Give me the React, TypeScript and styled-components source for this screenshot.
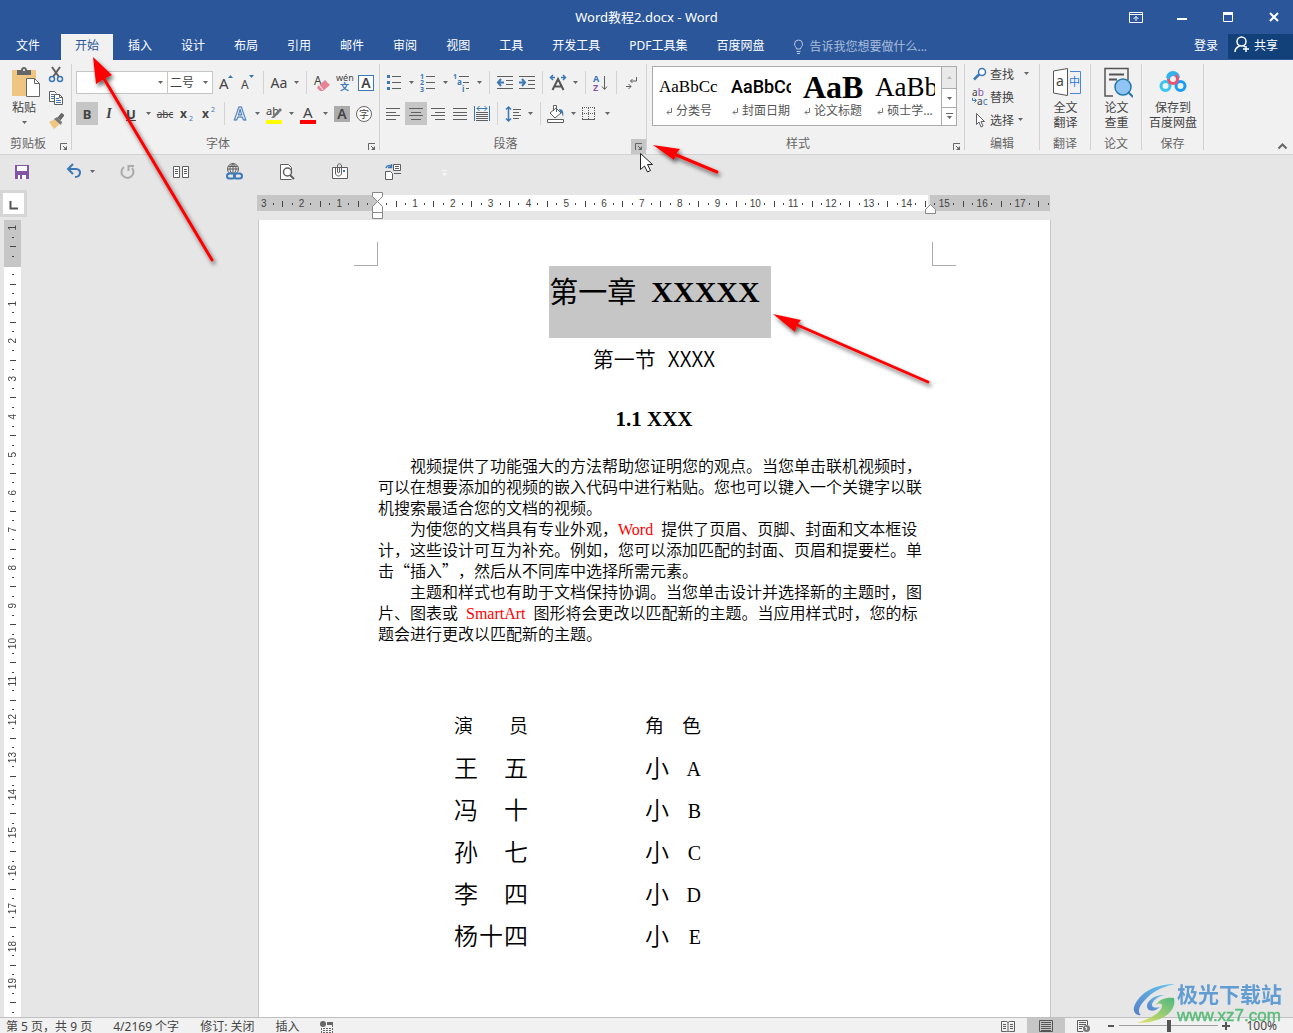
import React from "react";
import styled, { createGlobalStyle, css } from "styled-components";

const UI = `"Noto Sans", "Noto Sans CJK SC", sans-serif`;
const SONG = `"Noto Sans CJK SC", sans-serif`;
const SERIF = `"Liberation Serif", "Noto Sans CJK SC", serif`;

const GlobalStyle = createGlobalStyle`
  *, *::before, *::after { box-sizing: border-box; }
  body { margin: 0; font-family: ${UI}; font-size: 12px; color: #444; background: #e6e6e6; }
  button, input, select { font: inherit; color: inherit; margin: 0; }
  button { border: 0; padding: 0; background: none; cursor: default; }
  h1, h2, h3, p { margin: 0; }
`;

/* ---------- shell ---------- */

const App = styled.div`
  position: relative;
  display: flex;
  flex-direction: column;
  height: 100vh;
  overflow: hidden;
`;

const TitleBar = styled.header`
  display: grid;
  grid-template-columns: 1fr auto 1fr;
  align-items: center;
  height: 34px;
  background: #2b579a;
  color: #fff;
`;
const WindowTitle = styled.span`
  grid-column: 2;
  padding-bottom: 2px;
  font-size: 13px;
`;
const WindowButtons = styled.div`
  display: flex;
  justify-content: flex-end;
  gap: 8px;
`;
const WindowButton = styled.button`
  display: grid;
  place-items: center;
  width: 38px;
  height: 32px;
`;

const TabBar = styled.nav`
  display: flex;
  gap: 1px;
  height: 26px;
  background: #2b579a;
  color: #fff;
`;
const Tab = styled.button<{ $active?: boolean; $first?: boolean }>`
  padding: 0 14px 4px;
  white-space: nowrap;
  ${(p) => p.$first && css`padding: 0 16px 4px; margin-right: 4px;`}
  ${(p) => p.$active && css`background: #f1f1f1; color: #2b579a;`}
`;
const TellMe = styled.label`
  display: flex;
  align-items: center;
  gap: 5px;
  margin-left: 14px;
  color: #b6c7e2;
`;
const TellMeInput = styled.input`
  width: 150px;
  padding: 0 0 2px;
  border: 0;
  outline: 0;
  background: transparent;
  &::placeholder { color: #a9bddb; opacity: 1; }
`;
const Account = styled.div`
  display: flex;
  margin-left: auto;
`;
const SignIn = styled.button`
  padding: 0 10px 4px;
`;
const Share = styled.button`
  display: flex;
  align-items: center;
  gap: 4px;
  height: 25px;
  padding: 0 15px 4px 6px;
  background: #124078;
`;

/* ---------- ribbon ---------- */

const Ribbon = styled.div`
  display: flex;
  flex: none;
  height: 95px;
  background: #f1f1f1;
  border-bottom: 1px solid #d2d2d2;
`;
const GroupBox = styled.section<{ $width: number }>`
  display: flex;
  flex-direction: column;
  flex: 0 0 ${(p) => p.$width}px;
  background: linear-gradient(#d2d2d2, #d2d2d2) right 4px / 1px 86px no-repeat;
  background-position: right 0 top 4px;
`;
const GroupBody = styled.div<{ $pad?: string; $column?: boolean }>`
  display: flex;
  flex: 1;
  flex-direction: ${(p) => (p.$column ? "column" : "row")};
  padding: ${(p) => p.$pad || "6px 0 0"};
`;
const GroupFoot = styled.footer`
  display: flex;
  height: 21px;
  padding-right: 1px;
  color: #666;
`;
const GroupName = styled.span`
  flex: 1;
  text-align: center;
  line-height: 22px;
`;
const Launcher = styled.button<{ $hot?: boolean }>`
  display: grid;
  place-items: center;
  align-self: flex-end;
  width: 15px;
  height: 15px;
  background: ${(p) => (p.$hot ? "#c6c6c6" : "none")};
`;
const Row = styled.div`
  display: flex;
  align-items: center;
  height: 31px;
`;
const Tool = styled.button<{ $on?: boolean }>`
  display: grid;
  place-items: center;
  flex: none;
  width: 22px;
  height: 23px;
  background: ${(p) => (p.$on ? "#c6c6c6" : "none")};
`;
const Drop = styled.button<{ $wide?: boolean }>`
  display: grid;
  place-items: center;
  flex: none;
  width: ${(p) => (p.$wide ? 24 : 12)}px;
  height: 14px;
`;
const Rule = styled.span`
  flex: none;
  width: 1px;
  height: 23px;
  margin: 0 4px;
  background: #d4d4d4;
`;
const ComboBox = styled.span<{ $width: number }>`
  position: relative;
  display: block;
  width: ${(p) => p.$width}px;
  height: 23px;
  background: #fff;
  border: 1px solid #c6c6c6;
  & + & { margin-left: -1px; margin-right: 2px; }
  svg { position: absolute; right: 4px; top: 9px; pointer-events: none; }
`;
const Select = styled.select`
  appearance: none;
  width: 100%;
  height: 100%;
  padding: 0 2px;
  border: 0;
  outline: 0;
  background: transparent;
`;
const BigButton = styled.button<{ $fit?: boolean }>`
  display: flex;
  flex-direction: column;
  align-items: center;
  flex: ${(p) => (p.$fit ? "none" : "1")};
  line-height: 15px;
  svg { display: block; }
`;
const BigLabel = styled.span`
  margin-top: 2px;
  white-space: pre-line;
  text-align: center;
`;
const PasteBox = styled.div`
  width: 48px;
  display: flex;
  flex-direction: column;
  align-items: center;
`;
const SmallStack = styled.div`
  display: flex;
  flex-direction: column;
  align-items: center;
  margin-top: -3px;
  width: 16px;
`;
const EditRow = styled.div`
  display: flex;
  align-items: center;
  height: 23px;
`;
const EditButton = styled.button`
  display: flex;
  align-items: center;
  gap: 2px;
  svg { width: 16px; }
`;

const Gallery = styled.div`
  display: flex;
  height: 60px;
  width: 305px;
  background: #fff;
  border: 1px solid #ababab;
`;
const StyleItem = styled.button`
  display: flex;
  flex-direction: column;
  align-items: center;
  flex: 1;
  min-width: 0;
  padding: 0 6px;
  overflow: hidden;
`;
const Preview = styled.span<{ $font: string; $size: number; $weight?: number }>`
  width: 60px;
  height: 36px;
  line-height: 40px;
  overflow: hidden;
  text-align: left;
  white-space: nowrap;
  color: #000;
  font-family: ${(p) => p.$font};
  font-size: ${(p) => p.$size}px;
  font-weight: ${(p) => p.$weight || 400};
`;
const StyleName = styled.span`
  display: flex;
  align-items: center;
  gap: 3px;
  line-height: 16px;
  white-space: nowrap;
  color: #555;
`;
const GalleryScroll = styled.div`
  display: grid;
  grid-template-rows: 21px 19px 18px;
  width: 15px;
`;
const ScrollButton = styled.button<{ $off?: boolean }>`
  display: grid;
  place-items: center;
  border-left: 1px solid #ababab;
  background: ${(p) => (p.$off ? "#e9e9e9" : "#fff")};
  & + & { border-top: 1px solid #ababab; }
`;
const Collapse = styled.button`
  align-self: flex-end;
  margin: 0 5px 0 auto;
`;

/* ---------- quick access ---------- */

const QuickAccess = styled.div`
  display: flex;
  align-items: center;
  flex: none;
  height: 35px;
  padding: 0 0 2px 11px;
`;
const QuickSlot = styled.div`
  display: flex;
  align-items: center;
  width: 53px;
`;

/* ---------- workspace ---------- */

const Workspace = styled.main`
  display: grid;
  grid-template-columns: 28px 1fr;
  flex: 1;
  min-height: 0;
`;
const Side = styled.div`
  display: flex;
  flex-direction: column;
  min-height: 0;
`;
const TabStop = styled.button`
  display: grid;
  place-items: center;
  flex: none;
  width: 27px;
  height: 27px;
  margin-bottom: 3px;
  padding-top: 4px;
  border: 3px solid #d6d6d6;
  background: #fff;
`;
const VRuler = styled.div`
  flex: 1;
  width: 17px;
  min-height: 0;
  margin-left: 4px;
  overflow: hidden;
  background: linear-gradient(#c6c6c6 47px, #fff 47px);
`;
const VTicks = styled.div`
  display: flex;
  flex-direction: column;
  height: 794px;
  margin-top: 3px;
`;
const Tick = styled.span`
  display: flex;
  align-items: center;
  justify-content: center;
  flex: 1 1 0;
  min-width: 0;
  min-height: 0;
  font: 10px/10px "Liberation Sans", sans-serif;
  color: #444;
`;
const Mark = styled.i<{ $w: number; $h: number }>`
  width: ${(p) => p.$w}px;
  height: ${(p) => p.$h}px;
  background: #444;
`;
const Turned = styled.span`
  writing-mode: vertical-rl;
  transform: rotate(180deg);
`;
const Canvas = styled.div`
  display: flex;
  flex-direction: column;
  align-items: center;
  min-height: 0;
  padding: 5px 14px 0 0;
`;
const HRuler = styled.div`
  position: relative;
  flex: none;
  width: 793px;
  height: 16px;
  margin-bottom: 9px;
  background: linear-gradient(
    to right,
    #c6c6c6 120px, #fff 120px, #fff 671px, #e6e6e6 671px, #e6e6e6 673px, #c6c6c6 673px
  );
`;
const HTicks = styled.div`
  display: flex;
  height: 17px;
  margin: 0 -3px 0 2px;
`;
const Indent = styled.svg<{ $x: number; $y: number }>`
  position: absolute;
  left: ${(p) => p.$x}px;
  top: ${(p) => p.$y}px;
`;
const Page = styled.article`
  flex: 1;
  width: 793px;
  min-height: 0;
  overflow: hidden;
  border: solid #c6c6c6;
  border-width: 0 1px;
  background: #fff;
  color: #000;
  margin-left: 2px;
  text-spacing-trim: space-all;
`;
const Corners = styled.div`
  display: flex;
  justify-content: space-between;
  padding: 22px 94px 0 95px;
`;
const Corner = styled.i<{ $right?: boolean }>`
  width: 24px;
  height: 24px;
  border: solid #ababab;
  border-width: ${(p) => (p.$right ? "0 0 1px 1px" : "0 1px 1px 0")};
`;
const TextArea = styled.div`
  display: flex;
  flex-direction: column;
  margin: 0 120px 0 119px;
`;
const Chapter = styled.h1`
  display: flex;
  align-self: center;
  gap: 15px;
  height: 72px;
  padding-right: 11px;
  margin-right: -12px;
  background: #c6c6c6;
  font: 400 29px/48px ${SONG};
`;
const ChapterLatin = styled.span`
  font-family: ${SERIF};
  font-size: 30px;
  font-weight: 700;
  line-height: 52px;
`;
const Section = styled.h2`
  display: flex;
  justify-content: center;
  gap: 12px;
  margin-bottom: 2px;
  font: 350 21px/40px ${SONG};
`;
const SubSection = styled.h3`
  margin: 18px 0 15px;
  text-align: center;
  font: 700 21px/42px ${SERIF};
`;
const Para = styled.p`
  text-indent: 32px;
  font: 350 16px/21px ${SONG};
`;
const Red = styled.span<{ $lead?: boolean }>`
  margin: 0 8px 0 ${(p) => (p.$lead ? 8 : 0)}px;
  color: #f00;
  font-family: "Liberation Serif", serif;
  font-weight: 400;
  line-height: 16px;
`;
const Cast = styled.table`
  align-self: flex-start;
  margin: 61px 0 0 76px;
  border-collapse: collapse;
  font: 350 24px/42px ${SONG};
`;
const Cell = styled.td`
  width: 74px;
  height: 42px;
  padding: 0;
  & + & { padding-left: 117px; box-sizing: content-box; width: 56px; height: 42px; }
`;
const HeadCell = styled(Cell).attrs({ as: "th", scope: "col" })`
  font-size: 19px;
  font-weight: 350;
`;
const Spread = styled.span`
  display: flex;
  justify-content: space-between;
  height: 42px;
  line-height: 40px;
`;
const Role = styled.span`
  font: 20px/44px "Liberation Serif", serif;
`;

/* ---------- status bar ---------- */

const StatusBar = styled.footer`
  display: flex;
  align-items: center;
  flex: none;
  height: 16px;
  padding: 0 16px 0 6px;
  border-top: 1px solid #c0c0c0;
  background: #f1f1f1;
  line-height: 18px;
`;
const StatusItems = styled.div`
  display: flex;
  align-items: center;
  height: 18px;
  margin-bottom: -3px;
  gap: 21px;
`;
const StatusRight = styled.div`
  display: flex;
  align-items: center;
  margin-left: auto;
`;
const ViewButton = styled.button<{ $on?: boolean }>`
  display: grid;
  place-items: center;
  width: 38px;
  height: 15px;
  background: ${(p) => (p.$on ? "#c6c6c6" : "none")};
`;
const ZoomButton = styled.button`
  display: grid;
  place-items: center;
  width: 16px;
`;
const ZoomRange = styled.input`
  appearance: none;
  width: 99px;
  height: 12px;
  background: linear-gradient(#a0a0a0, #a0a0a0) center / 100% 1px no-repeat;
  &::-webkit-slider-thumb { appearance: none; width: 4px; height: 12px; background: #555; }
`;
const ZoomValue = styled.span`
  width: 32px;
  margin-left: 11px;
  text-align: right;
`;

/* ---------- overlays ---------- */

const Annotations = styled.svg`
  position: absolute;
  left: 0;
  top: 0;
  pointer-events: none;
`;
const Watermark = styled.div`
  position: absolute;
  right: 11px;
  bottom: 8px;
  display: flex;
  align-items: center;
  gap: 2px;
  opacity: 0.85;
  pointer-events: none;
`;
const MarkText = styled.div`
  display: flex;
  flex-direction: column;
`;
const MarkName = styled.span`
  padding-bottom: 2px;
  font: 700 21px/24px ${SONG};
  color: #4a90d0;
`;
const MarkUrl = styled.span`
  font: 400 17px/18px "Liberation Sans", sans-serif;
  color: #45b56a;
  -webkit-text-stroke: 0.5px #45b56a;
`;

/* ---------- icons ---------- */

const G = "#5f5f5f";
const B = "#3b78b5";

type IcoProps = { w?: number; h?: number; children: React.ReactNode };
const Ico = ({ w = 22, h = 22, children }: IcoProps) => (
  <svg width={w} height={h} viewBox={`0 0 ${w} ${h}`} fill="none" aria-hidden="true">
    {children}
  </svg>
);
const Caret = ({ color = "#666" }: { color?: string }) => (
  <Ico w={5} h={3}><path d="M0 0h5L2.500 3z" fill={color} /></Ico>
);
const Arrow = ({ label, wide }: { label: string; wide?: boolean }) => (
  <Drop aria-label={label} $wide={wide}><Caret /></Drop>
);
const lines = (list: number[][], color = G) => (
  <path d={list.map(([x, y, w]) => `M${x} ${y + 0.5}h${w}`).join("")} stroke={color} />
);

const Glyph = styled.span<{ $size?: number; $bold?: boolean; $italic?: boolean; $line?: string; $serif?: boolean }>`
  font-family: ${(p) => (p.$serif ? `"Liberation Serif", serif` : UI)};
  font-size: ${(p) => p.$size || 14}px;
  line-height: 20px;
  font-weight: ${(p) => (p.$bold ? 700 : 400)};
  font-style: ${(p) => (p.$italic ? "italic" : "normal")};
  text-decoration: ${(p) => p.$line || "none"};
  color: #444;
`;
const Boxed = styled.span<{ $fill?: boolean; $round?: boolean }>`
  display: grid;
  place-items: center;
  width: 16px;
  height: 16px;
  line-height: 14px;
  font-size: ${(p) => (p.$round ? 10 : 14)}px;
  font-weight: ${(p) => (p.$round ? 400 : 600)};
  border: ${(p) => (p.$fill ? "0" : p.$round ? "1px solid #666" : "1px solid #3b78b5")};
  border-radius: ${(p) => (p.$round ? "50%" : "0")};
  background: ${(p) => (p.$fill ? "#ababab" : "#fff")};
`;
const SvgText = styled.text<{ $c?: string; $s: number; $b?: boolean }>`
  font-family: ${UI};
  font-size: ${(p) => p.$s}px;
  font-weight: ${(p) => (p.$b ? 700 : 400)};
  fill: ${(p) => p.$c || "#444"};
`;

const icons = {
  paste: (
    <Ico w={32} h={32}>
      <path d="M4 4h24v26H4z" fill="#eec581" />
      <path d="M9 4h4c0-4 6-4 6 0h4v5H9z" fill="#666" />
      <circle cx="16" cy="4" r="1" fill="#fff" />
      <path d="M18.500 12.500h8l5 5v13h-13z" fill="#fff" stroke="#666" />
      <path d="M26.500 12.500v5h5" stroke="#666" />
    </Ico>
  ),
  cut: (
    <Ico w={16}>
      <path d="M4 3l7 10M12 3L5 13" stroke={G} strokeWidth="2" />
      <circle cx="4" cy="15" r="2.500" stroke={B} strokeWidth="1.500" />
      <circle cx="12" cy="15" r="2.500" stroke={B} strokeWidth="1.500" />
    </Ico>
  ),
  copy: (
    <Ico w={16}>
      <path d="M6.500 14.500h-5v-10h5l2 2" stroke={G} fill="#fff" />
      <path d="M6.500 7.500h5l3 3v7h-8z" fill="#fff" stroke={G} />
      <path d="M11.500 7.500v3h3" stroke={G} />
      <path d="M3 7.500h3M3 9.500h3M3 11.500h3M8 11.500h3M8 13.500h5M8 15.500h5" stroke={B} />
    </Ico>
  ),
  brush: (
    <Ico w={16}>
      <path d="M1 12l6-3 5 5-6 5z" fill="#eec581" />
      <path d="M6 9l3-2 5 5-1 3z" fill="#777" />
      <path d="M11 9l4-5" stroke="#666" strokeWidth="4" />
    </Ico>
  ),
  launch: (
    <Ico w={9} h={9}>
      <path d="M1.500 8V1.500H8M4 4l3 3" stroke="#666" />
      <path d="M8 4v4H4z" fill="#666" />
    </Ico>
  ),
  grow: (
    <Ico><SvgText x="4" y="17" $s={15}>A</SvgText><path d="M13 6h5l-2.500-3z" fill={B} /></Ico>
  ),
  shrink: (
    <Ico><SvgText x="4" y="17" $s={12}>A</SvgText><path d="M12 3h5l-2.500 3z" fill={B} /></Ico>
  ),
  eraser: (
    <Ico>
      <SvgText x="3" y="13" $s={12}>A</SvgText>
      <path d="M7 14l7-6 5 5-7 6H9l-3-3z" fill="#e58595" />
      <path d="M8 13l4 5" stroke="#fff" />
    </Ico>
  ),
  phonetic: (
    <Ico w={20}>
      <SvgText x="2" y="9" $s={9}>wén</SvgText>
      <SvgText x="6" y="18" $s={9} $c={B} $b>文</SvgText>
    </Ico>
  ),
  effects: (
    <Ico>
      <text x="11" y="17" textAnchor="middle" fontFamily="Noto Sans" fontSize="17" fontWeight="600" fill="#fff" stroke={B} strokeWidth="1">A</text>
    </Ico>
  ),
  highlight: (
    <Ico>
      <SvgText x="3" y="12" $s={11}>ab</SvgText>
      <path d="M8 15l9-10 2 2-8 8z" fill="#777" />
      <path d="M3 17h16v4H3z" fill="#ff0" />
    </Ico>
  ),
  color: (
    <Ico><SvgText x="6" y="15" $s={15}>A</SvgText><path d="M3 17h16v4H3z" fill="#f00" /></Ico>
  ),
  bullets: (
    <Ico>
      <path d="M4 3h3v3H4zM4 9h3v3H4zM4 15h3v3H4z" fill={B} />
      {lines([[9, 4, 9], [9, 10, 9], [9, 16, 9]])}
    </Ico>
  ),
  numbers: (
    <Ico>
      <SvgText x="3" y="7" $s={7} $c={B} $b>1</SvgText>
      <SvgText x="3" y="13" $s={7} $c={B} $b>2</SvgText>
      <SvgText x="3" y="20" $s={7} $c={B} $b>3</SvgText>
      {lines([[9, 4, 9], [9, 10, 9], [9, 16, 9]])}
    </Ico>
  ),
  multi: (
    <Ico>
      <SvgText x="2" y="7" $s={7} $c={B} $b>1</SvgText>
      <SvgText x="6" y="13" $s={8} $c={B} $b>a</SvgText>
      <SvgText x="11" y="20" $s={8} $c={B} $b>i</SvgText>
      {lines([[8, 4, 10], [12, 10, 6], [15, 16, 3]])}
    </Ico>
  ),
  outdent: (
    <Ico>
      {lines([[3, 4, 16], [12, 8, 7], [12, 12, 7], [3, 16, 16]])}
      <path d="M10 10.500H4M7 7l-3 3.500L7 14" stroke={B} strokeWidth="2" />
    </Ico>
  ),
  indent: (
    <Ico>
      {lines([[3, 4, 16], [12, 8, 7], [12, 12, 7], [3, 16, 16]])}
      <path d="M3 10.500h6M6 7l3 3.500L6 14" stroke={B} strokeWidth="2" />
    </Ico>
  ),
  asian: (
    <Ico>
      <path d="M5.500 18L11 7l5.500 11M7.500 14.500h7" stroke="#555" strokeWidth="2" />
      <path d="M8 5.500H4M6 3L3.500 5.500 6 8M14 5.500h4M16 3l2.500 2.500L16 8" stroke={B} strokeWidth="1.500" />
    </Ico>
  ),
  sort: (
    <Ico>
      <SvgText x="3" y="10" $s={9} $c={B} $b>A</SvgText>
      <SvgText x="3" y="19" $s={9} $c="#8a56a8" $b>Z</SvgText>
      <path d="M14.500 4v13M12 14.500l2.500 3 2.500-3" stroke={G} />
    </Ico>
  ),
  marks: (
    <Ico>
      <path d="M15.500 5v4h-6M11.500 7l-2 2 2 2M5 14.500h5M7.500 12l2.500 2.500L7.500 17" stroke={G} />
    </Ico>
  ),
  left: <Ico>{lines([[3, 5, 14], [3, 9, 10], [3, 12, 14], [3, 16, 10]])}</Ico>,
  center: <Ico>{lines([[4, 5, 14], [6, 9, 10], [4, 12, 14], [6, 16, 10]])}</Ico>,
  right: <Ico>{lines([[4, 5, 14], [8, 9, 10], [4, 12, 14], [8, 16, 10]])}</Ico>,
  justify: <Ico>{lines([[4, 5, 14], [4, 9, 14], [4, 12, 14], [4, 16, 14]])}</Ico>,
  distribute: (
    <Ico>
      <path d="M3.500 3v15M18.500 3v15M6 5.500h10M8.500 3L6 5.500 8.500 8M13.500 3L16 5.500 13.500 8" stroke={B} />
      {lines([[5, 9, 12], [5, 11, 12], [5, 13, 12], [5, 15, 12], [5, 17, 12]])}
    </Ico>
  ),
  spacing: (
    <Ico>
      <path d="M6.500 4v14M4 6.500L6.500 4 9 6.500M4 15.500L6.500 18 9 15.500" stroke={B} strokeWidth="1.500" />
      {lines([[11, 6, 8], [11, 9, 6], [11, 12, 8], [11, 15, 6]])}
    </Ico>
  ),
  shading: (
    <Ico>
      <path d="M5 10l6-5 5 5-6 5zM8.500 8V2.500h3V9" fill="#fff" stroke={G} />
      <path d="M14 6c4 0 5 3 4 8-1-3-1-4-3-5z" fill={B} />
      <path d="M2.500 16.500h16v3h-16z" fill="#fff" stroke={G} />
    </Ico>
  ),
  border: (
    <Ico>
      <path d="M3 4.500h14M3 10.500h14M3.500 5v12M9.500 5v12M15.500 5v12" stroke={G} strokeDasharray="1 1" />
      <path d="M3 16.500h13" stroke={G} />
    </Ico>
  ),
  find: (
    <Ico w={16} h={16}>
      <circle cx="10" cy="6" r="3.500" stroke={B} strokeWidth="1.500" fill="#fff" />
      <path d="M7 8.500L2 13.500" stroke={B} strokeWidth="2.500" />
    </Ico>
  ),
  replace: (
    <Ico w={16} h={18}>
      <SvgText x="0" y="8" $s={10}>a<tspan fill="#8a56a8">b</tspan></SvgText>
      <SvgText x="5" y="17" $s={10}>a<tspan fill={B}>c</tspan></SvgText>
      <path d="M.5 10v2.500H4M2.500 10.500l2 2-2 2" stroke={B} />
    </Ico>
  ),
  pointer: (
    <Ico w={16} h={16}>
      <path d="M4.500 1.500v11l2.500-2.500 2 5 2-1-2-4.500h3.500z" fill="#fff" stroke={G} />
    </Ico>
  ),
  translate: (
    <Ico w={32} h={32}>
      <path d="M3.500 5L17.500 2.500v27L3.500 27z" fill="#fff" stroke="#555" />
      <path d="M20 5.500h10.500v22H20" stroke="#4a86d8" />
      <SvgText x="6" y="20" $s={14}>a</SvgText>
      <SvgText x="19" y="20" $s={11} $c="#2f78d8">中</SvgText>
    </Ico>
  ),
  paper: (
    <Ico w={32} h={32}>
      <path d="M12 30H4V2.500h23V14" stroke="#555" strokeWidth="1.500" />
      <path d="M8 8.500h15M8 13.500h8" stroke="#555" strokeWidth="2" />
      <circle cx="22" cy="21" r="8" fill="#8fc4f5" stroke="#2378a8" strokeWidth="1.500" />
      <path d="M27 26l5 5" stroke="#2378a8" strokeWidth="2" />
    </Ico>
  ),
  baidu: (
    <Ico w={32} h={32}>
      <path d="M11 12a5 5 0 0 1 10 0" stroke="#2fb4ee" strokeWidth="4" />
      <circle cx="8.500" cy="20" r="4.500" stroke="#35c5f2" strokeWidth="3" />
      <circle cx="23.500" cy="20" r="4.500" stroke="#1a9df5" strokeWidth="3" />
      <circle cx="16" cy="13" r="4.500" stroke="#f0506e" strokeWidth="3" />
      <path d="M11.500 13a4.500 4.500 0 0 1 7-4" stroke="#2fb4ee" strokeWidth="3" />
    </Ico>
  ),
  save: (
    <Ico>
      <path d="M4 4h14v14H4z" fill="#8553a5" />
      <path d="M6 5h10v5H6zM7 14h8v4H7z" fill="#fff" />
      <path d="M9 14h2v4H9z" fill="#8553a5" />
    </Ico>
  ),
  undo: (
    <Ico>
      <path d="M5 8h7c6 0 5 8-1 8" stroke={B} strokeWidth="2" />
      <path d="M9 3L4 8l5 5" stroke={B} strokeWidth="2" />
    </Ico>
  ),
  redo: (
    <Ico>
      <path d="M7 6a6 6 0 1 0 8 1" stroke="#ababab" strokeWidth="2" />
      <path d="M11.500 10V5H17" stroke="#ababab" strokeWidth="2" />
    </Ico>
  ),
  columns: (
    <Ico>
      <path d="M3.500 5.500h6v11h-6zM12.500 5.500h6v11h-6z" fill="#fff" stroke={G} />
      {lines([[5, 8, 3], [5, 10, 3], [5, 12, 3], [14, 8, 3], [14, 10, 3], [14, 12, 3]])}
    </Ico>
  ),
  link: (
    <Ico>
      <circle cx="10" cy="8" r="5.500" stroke={G} />
      <path d="M4.500 8h11M10 2.500v11M5.500 5.500h9M10 2.500c-4 3-4 8 0 11M10 2.500c4 3 4 8 0 11" stroke={G} />
      <rect x="4" y="12.500" width="8" height="5" rx="2.500" stroke={B} strokeWidth="2" fill="#e6e6e6" />
      <rect x="11" y="12.500" width="8" height="5" rx="2.500" stroke={B} strokeWidth="2" />
    </Ico>
  ),
  preview: (
    <Ico>
      <path d="M15.500 18.500h-11v-15h8l3 3v4" fill="#fff" stroke={G} />
      <circle cx="11.500" cy="11" r="4" fill="#fff" stroke={G} strokeWidth="1.500" />
      <path d="M14 14l4 4" stroke={G} strokeWidth="2" />
    </Ico>
  ),
  attach: (
    <Ico>
      <path d="M3.500 6.500h15v11h-15z" fill="#fff" stroke={G} />
      <path d="M6.500 6v6c0 4 6 4 6 0V5c0-3-4-3-4 0v6c0 1 2 1 2 0V6" stroke={G} />
      <path d="M14 9h2v2h-2z" fill={B} />
    </Ico>
  ),
  transfer: (
    <Ico>
      <path d="M3.500 10.500h5l2 2v6h-7z" fill="#fff" stroke={G} />
      <path d="M11.500 3.500h7v6h-7z" fill="#fff" stroke={G} />
      <path d="M13 5.500h4M13 7.500h4M12 12.500h7" stroke={G} />
      <path d="M4 7c1-3 4-3 5-1M9.500 3v3.500H6" stroke={B} strokeWidth="1.500" />
    </Ico>
  ),
  more: (
    <Ico><path d="M7 9.500h5" stroke="#f8f8f8" /><path d="M7 12h5l-2.500 3z" fill="#f8f8f8" /></Ico>
  ),
};

type Kind = keyof typeof icons;

const T = ({ icon, label, on }: { icon: Kind; label: string; on?: boolean }) => (
  <Tool aria-label={label} $on={on}>{icons[icon]}</Tool>
);

const Group = ({ name, width, pad, column, launcher, hot, children }: {
  name: string; width: number; pad?: string; column?: boolean; launcher?: boolean; hot?: boolean; children: React.ReactNode;
}) => (
  <GroupBox $width={width} aria-label={name}>
    <GroupBody $pad={pad} $column={column}>{children}</GroupBody>
    <GroupFoot>
      <GroupName>{name}</GroupName>
      {launcher && <Launcher aria-label={`${name}设置`} $hot={hot}>{icons.launch}</Launcher>}
    </GroupFoot>
  </GroupBox>
);

const tabs = ["文件", "开始", "插入", "设计", "布局", "引用", "邮件", "审阅", "视图", "工具", "开发工具", "PDF工具集", "百度网盘"];

const styleItems = [
  { name: "分类号", font: SERIF, size: 17 },
  { name: "封面日期", font: "Roboto, sans-serif", size: 18, weight: 500 },
  { name: "论文标题", font: SERIF, size: 32, weight: 700 },
  { name: "硕士学...", font: SERIF, size: 27 },
];

const cast = [["王五", "A"], ["冯十", "B"], ["孙七", "C"], ["李四", "D"], ["杨十四", "E"]];

const spread = (s: string) => <Spread>{[...s].map((c) => <span key={c}>{c}</span>)}</Spread>;

/* Each ruler unit is four ticks: number, dot, bar, dot. */
const Ticks = ({ zero, vertical }: { zero: number; vertical?: boolean }) => (
  <>
    {Array.from({ length: 84 }, (_, i) => {
      const d = i - zero;
      const phase = ((d % 4) + 4) % 4;
      const n = Math.abs(d / 4);
      if (phase === 0) return <Tick key={i}>{n > 0 && (vertical ? <Turned>{n}</Turned> : n)}</Tick>;
      const len = phase === 2 ? 6 : 2;
      return <Tick key={i}>{vertical ? <Mark $w={len} $h={1} /> : <Mark $w={1} $h={len} />}</Tick>;
    })}
  </>
);

const arrows = [
  { head: "93,57 112,75 104,79 96,84", line: "M103 77L212 260" },
  { head: "773,314 801,320 797,325 795,332", line: "M795 324L928 382" },
  { head: "653,145 680,149 676,154 674,160", line: "M674 154L717 172" },
];

export default function WordWindow() {
  return (
    <App>
      <GlobalStyle />
      <TitleBar>
        <WindowTitle>Word教程2.docx - Word</WindowTitle>
        <WindowButtons>
          <WindowButton aria-label="功能区显示选项">
            <Ico w={14} h={11}><path d="M.5.5h13v10H.5zM.5 2.500h13M7 9V4.500M4.500 7L7 4.500 9.500 7" stroke="#fff" /></Ico>
          </WindowButton>
          <WindowButton aria-label="最小化"><Ico w={10} h={8}><path d="M0 6h10" stroke="#fff" strokeWidth="2" /></Ico></WindowButton>
          <WindowButton aria-label="最大化"><Ico w={10} h={10}><path d="M.5 1h9v8.500h-9zM0 1.500h10" stroke="#fff" /><path d="M0 0h10v3H0z" fill="#fff" /></Ico></WindowButton>
          <WindowButton aria-label="关闭"><Ico w={10} h={10}><path d="M1 1l8 8M9 1L1 9" stroke="#fff" strokeWidth="2" /></Ico></WindowButton>
        </WindowButtons>
      </TitleBar>

      <TabBar>
        {tabs.map((t, i) => <Tab key={t} $first={i === 0} $active={i === 1}>{t}</Tab>)}
        <TellMe>
          <Ico w={11} h={16}>
            <path d="M3.500 10C3.500 8 1.500 7.500 1.500 5a4 4 0 0 1 8 0c0 2.500-2 3-2 5zM3.500 12.500h4M4 14.500h3" stroke="#b6c7e2" />
          </Ico>
          <TellMeInput aria-label="告诉我您想要做什么" placeholder="告诉我您想要做什么..." />
        </TellMe>
        <Account>
          <SignIn>登录</SignIn>
          <Share>
            <Ico w={16} h={17}>
              <circle cx="7.500" cy="5.500" r="4.500" stroke="#fff" strokeWidth="1.500" />
              <path d="M1 16c0-3 2-5 4.500-6M9.500 10l1.500 1M12 10v6M9 13h6" stroke="#fff" strokeWidth="1.500" />
            </Ico>
            共享
          </Share>
        </Account>
      </TabBar>

      <Ribbon>
        <Group name="剪贴板" width={72} launcher>
          <PasteBox>
            <BigButton $fit>{icons.paste}<BigLabel>粘贴</BigLabel></BigButton>
            <Arrow label="粘贴选项" />
          </PasteBox>
          <SmallStack>
            <Tool aria-label="剪切">{icons.cut}</Tool>
            <Tool aria-label="复制">{icons.copy}</Tool>
            <Tool aria-label="格式刷">{icons.brush}</Tool>
          </SmallStack>
        </Group>

        <Group name="字体" width={308} pad="7px 0 0 4px" column launcher>
          <Row>
            <ComboBox $width={92}>
              <Select aria-label="字体名称" defaultValue=""><option value=""></option></Select><Caret />
            </ComboBox>
            <ComboBox $width={46}>
              <Select aria-label="字号"><option>二号</option></Select><Caret />
            </ComboBox>
            <T icon="grow" label="增大字号" /><T icon="shrink" label="减小字号" /><Rule />
            <Tool aria-label="更改大小写"><Glyph>Aa</Glyph></Tool><Arrow label="大小写选项" /><Rule />
            <T icon="eraser" label="清除格式" /><T icon="phonetic" label="拼音指南" />
            <Tool aria-label="字符边框"><Boxed>A</Boxed></Tool>
          </Row>
          <Row>
            <Tool $on aria-label="加粗"><Glyph $bold $size={13}>B</Glyph></Tool>
            <Tool aria-label="倾斜"><Glyph $serif $italic $bold $size={14}>I</Glyph></Tool>
            <Tool aria-label="下划线"><Glyph $line="underline" $bold $size={13}>U</Glyph></Tool><Arrow label="下划线选项" />
            <Tool aria-label="删除线"><Glyph $line="line-through" $size={10}>abc</Glyph></Tool>
            <Tool aria-label="下标"><Ico><SvgText x="4" y="15" $s={12} $b>x</SvgText><SvgText x="13" y="18" $s={7} $c={B}>2</SvgText></Ico></Tool>
            <Tool aria-label="上标"><Ico><SvgText x="4" y="15" $s={12} $b>x</SvgText><SvgText x="13" y="9" $s={7} $c={B}>2</SvgText></Ico></Tool>
            <Rule />
            <T icon="effects" label="文本效果" /><Arrow label="文本效果选项" />
            <T icon="highlight" label="突出显示" /><Arrow label="突出显示颜色" />
            <T icon="color" label="字体颜色" /><Arrow label="字体颜色选项" />
            <Tool aria-label="字符底纹"><Boxed $fill>A</Boxed></Tool>
            <Tool aria-label="带圈字符"><Boxed $round>字</Boxed></Tool>
          </Row>
        </Group>

        <Group name="段落" width={267} pad="7px 0 0 3px" column launcher hot>
          <Row>
            <T icon="bullets" label="项目符号" /><Arrow label="项目符号库" />
            <T icon="numbers" label="编号" /><Arrow label="编号库" />
            <T icon="multi" label="多级列表" /><Arrow label="列表库" /><Rule />
            <T icon="outdent" label="减少缩进量" /><T icon="indent" label="增加缩进量" /><Rule />
            <T icon="asian" label="中文版式" /><Arrow label="中文版式选项" /><Rule />
            <T icon="sort" label="排序" /><Rule />
            <T icon="marks" label="显示编辑标记" />
          </Row>
          <Row>
            <T icon="left" label="左对齐" /><T icon="center" label="居中" on /><T icon="right" label="右对齐" />
            <T icon="justify" label="两端对齐" /><T icon="distribute" label="分散对齐" /><Rule />
            <T icon="spacing" label="行距" /><Arrow label="行距选项" /><Rule />
            <T icon="shading" label="底纹" /><Arrow label="底纹颜色" />
            <T icon="border" label="边框" /><Arrow label="边框选项" />
          </Row>
        </Group>

        <Group name="样式" width={318} pad="6px 0 0 5px" launcher>
          <Gallery>
            {styleItems.map((s) => (
              <StyleItem key={s.name}>
                <Preview $font={s.font} $size={s.size} $weight={s.weight}>AaBbCc</Preview>
                <StyleName>
                  <Ico w={7} h={7}><path d="M5.500 0v4.500H1M3 2.500l-2 2 2 2" stroke="#777" /></Ico>
                  {s.name}
                </StyleName>
              </StyleItem>
            ))}
            <GalleryScroll>
              <ScrollButton $off aria-label="上一行"><Ico w={5} h={3}><path d="M0 3h5L2.500 0z" fill="#bbb" /></Ico></ScrollButton>
              <ScrollButton aria-label="下一行"><Caret /></ScrollButton>
              <ScrollButton aria-label="其他样式"><Ico w={7} h={7}><path d="M0 .5h7" stroke="#666" /><path d="M1 3h5L3.500 6z" fill="#666" /></Ico></ScrollButton>
            </GalleryScroll>
          </Gallery>
        </Group>

        <Group name="编辑" width={75} pad="2px 0 0 7px" column>
          <EditRow><EditButton>{icons.find}查找</EditButton><Arrow wide label="查找选项" /></EditRow>
          <EditRow><EditButton>{icons.replace}替换</EditButton></EditRow>
          <EditRow><EditButton>{icons.pointer}选择</EditButton><Arrow label="选择选项" /></EditRow>
        </Group>
        <Group name="翻译" width={51}><BigButton>{icons.translate}<BigLabel>{"全文\n翻译"}</BigLabel></BigButton></Group>
        <Group name="论文" width={51}><BigButton>{icons.paper}<BigLabel>{"论文\n查重"}</BigLabel></BigButton></Group>
        <Group name="保存" width={62}><BigButton>{icons.baidu}<BigLabel>{"保存到\n百度网盘"}</BigLabel></BigButton></Group>
        <Collapse aria-label="折叠功能区"><Ico w={11} h={8}><path d="M1.500 6.500l4-4 4 4" stroke="#666" strokeWidth="2" /></Ico></Collapse>
      </Ribbon>

      <QuickAccess>
        <QuickSlot><T icon="save" label="保存" /></QuickSlot>
        <QuickSlot><T icon="undo" label="撤消" /><Arrow label="撤消列表" /></QuickSlot>
        <QuickSlot><T icon="redo" label="重复" /></QuickSlot>
        <QuickSlot><T icon="columns" label="并排" /></QuickSlot>
        <QuickSlot><T icon="link" label="超链接" /></QuickSlot>
        <QuickSlot><T icon="preview" label="打印预览" /></QuickSlot>
        <QuickSlot><T icon="attach" label="附件" /></QuickSlot>
        <QuickSlot><T icon="transfer" label="转换" /></QuickSlot>
        <QuickSlot><T icon="more" label="自定义" /></QuickSlot>
      </QuickAccess>

      <Workspace>
        <Side>
          <TabStop aria-label="制表符"><Ico w={9} h={9}><path d="M1.500 0v7.500H9" stroke="#555" strokeWidth="2" /></Ico></TabStop>
          <VRuler><VTicks><Ticks zero={4} vertical /></VTicks></VRuler>
        </Side>
        <Canvas>
          <HRuler>
            <HTicks><Ticks zero={12} /></HTicks>
            <Indent $x={115} $y={-3} width="11" height="28" fill="#fff" stroke="#888">
              <path d="M.5.5h10v4l-5 5-5-5zM.5 20.500v-6l5-5 5 5v6z" />
              <path d="M.5 20.500h10v6H.5z" />
            </Indent>
            <Indent $x={668} $y={9} width="11" height="10" fill="#fff" stroke="#888">
              <path d="M.5 9.500v-4l5-5 5 5v4z" />
            </Indent>
          </HRuler>
          <Page>
            <Corners><Corner /><Corner $right /></Corners>
            <TextArea>
              <Chapter><span>第一章</span><ChapterLatin>XXXXX</ChapterLatin></Chapter>
              <Section><span>第一节</span><span>XXXX</span></Section>
              <SubSection>1.1 XXX</SubSection>
              <Para>视频提供了功能强大的方法帮助您证明您的观点。当您单击联机视频时，可以在想要添加的视频的嵌入代码中进行粘贴。您也可以键入一个关键字以联机搜索最适合您的文档的视频。</Para>
              <Para>为使您的文档具有专业外观，<Red>Word</Red>提供了页眉、页脚、封面和文本框设计，这些设计可互为补充。例如，您可以添加匹配的封面、页眉和提要栏。单击“插入”，然后从不同库中选择所需元素。</Para>
              <Para>主题和样式也有助于文档保持协调。当您单击设计并选择新的主题时，图片、图表或<Red $lead>SmartArt</Red>图形将会更改以匹配新的主题。当应用样式时，您的标题会进行更改以匹配新的主题。</Para>
              <Cast>
                <thead><tr><HeadCell>{spread("演员")}</HeadCell><HeadCell>{spread("角色")}</HeadCell></tr></thead>
                <tbody>
                  {cast.map(([who, role]) => (
                    <tr key={who}>
                      <Cell>{spread(who)}</Cell>
                      <Cell><Spread><span>小</span><Role>{role}</Role></Spread></Cell>
                    </tr>
                  ))}
                </tbody>
              </Cast>
            </TextArea>
          </Page>
        </Canvas>
      </Workspace>

      <StatusBar>
        <StatusItems>
          <span>第 5 页，共 9 页</span>
          <span>4/2169 个字</span>
          <span>修订: 关闭</span>
          <span>插入</span>
          <Ico w={14} h={12}><circle cx="3" cy="3" r="3" fill="#666" /><path d="M7 1h6v3H7z" fill="#666" /><path d="M1.500 7v5M12.500 4v8M3 7.500h8M3 9.500h8M3 11.500h8" stroke="#666" strokeDasharray="2 1" /></Ico>
        </StatusItems>
        <StatusRight>
          <ViewButton aria-label="阅读视图"><Ico w={14} h={12}><path d="M.5 1.500h5l1.500 1 1.500-1h5v10h-5L7 12l-1.500-.5h-5zM7 2.500V12M2 4.500h3M2 6.500h3M2 8.500h3M9 4.500h3M9 6.500h3M9 8.500h3" stroke={G} /></Ico></ViewButton>
          <ViewButton $on aria-label="页面视图"><Ico w={14} h={12}><path d="M.5.500h13v11H.5zM2 2.500h10M2 4.500h10M2 6.500h10M2 8.500h10M2 10.500h10" stroke="#555" /></Ico></ViewButton>
          <ViewButton aria-label="Web 版式"><Ico w={14} h={12}><path d="M6 11.500H.5v-11h10V5M2 2.500h7M2 4.500h7M2 6.500h4M2 8.500h3" stroke={G} /><circle cx="9.500" cy="8.500" r="3.500" fill="#777" /><path d="M8 7l2 1-1 2" stroke="#fff" /></Ico></ViewButton>
          <ZoomButton aria-label="缩小"><Ico w={8} h={8}><path d="M1 4h6" stroke="#555" strokeWidth="2" /></Ico></ZoomButton>
          <ZoomRange type="range" aria-label="显示比例" defaultValue={50} />
          <ZoomButton aria-label="放大"><Ico w={8} h={8}><path d="M0 4h8M4 0v8" stroke="#555" strokeWidth="2" /></Ico></ZoomButton>
          <ZoomValue>100%</ZoomValue>
        </StatusRight>
      </StatusBar>

      <Watermark>
        <Ico w={42} h={40}>
          <defs>
            <linearGradient id="sky" x1="0" y1="1" x2="1" y2="0"><stop offset="0" stopColor="#3d6fc4" /><stop offset="1" stopColor="#4fc3ee" /></linearGradient>
            <linearGradient id="leaf" x1="0" y1="1" x2="1" y2="0"><stop offset="0" stopColor="#e8e050" /><stop offset="1" stopColor="#35b070" /></linearGradient>
          </defs>
          <path d="M42 1C22 1 6 10 1 24c-1 5 2 9 7 8-4-3-2-9 4-15C19 9 28 4 42 1z" fill="url(#sky)" />
          <path d="M32 12c-9-1-18 5-18 11 0 6 8 6 13 1-3 1-8 1-8-2 0-4 6-9 13-10z" fill="url(#sky)" />
          <path d="M41 15c3 13-11 25-37 25 12-4 24-10 25-17 0-3-3-3-6-1 3-6 11-8 18-7z" fill="url(#leaf)" />
        </Ico>
        <MarkText><MarkName>极光下载站</MarkName><MarkUrl>www.xz7.com</MarkUrl></MarkText>
      </Watermark>

      <Annotations width="100%" height="100%" aria-hidden="true">
        <defs>
          <filter id="lift" x="-20%" y="-20%" width="150%" height="150%">
            <feDropShadow dx="2" dy="3" stdDeviation="2" floodColor="#000" floodOpacity="0.6" />
          </filter>
        </defs>
        {arrows.map((a) => (
          <g key={a.head} filter="url(#lift)">
            <polygon points={a.head} fill="#f00" />
            <path d={a.line} stroke="#f00" strokeWidth="3" strokeLinecap="round" />
          </g>
        ))}
        <path d="M640.500 153.500v16l4-3.500 3 6 3-1.500-3-6h5z" fill="#fff" stroke="#222" />
      </Annotations>
    </App>
  );
}
